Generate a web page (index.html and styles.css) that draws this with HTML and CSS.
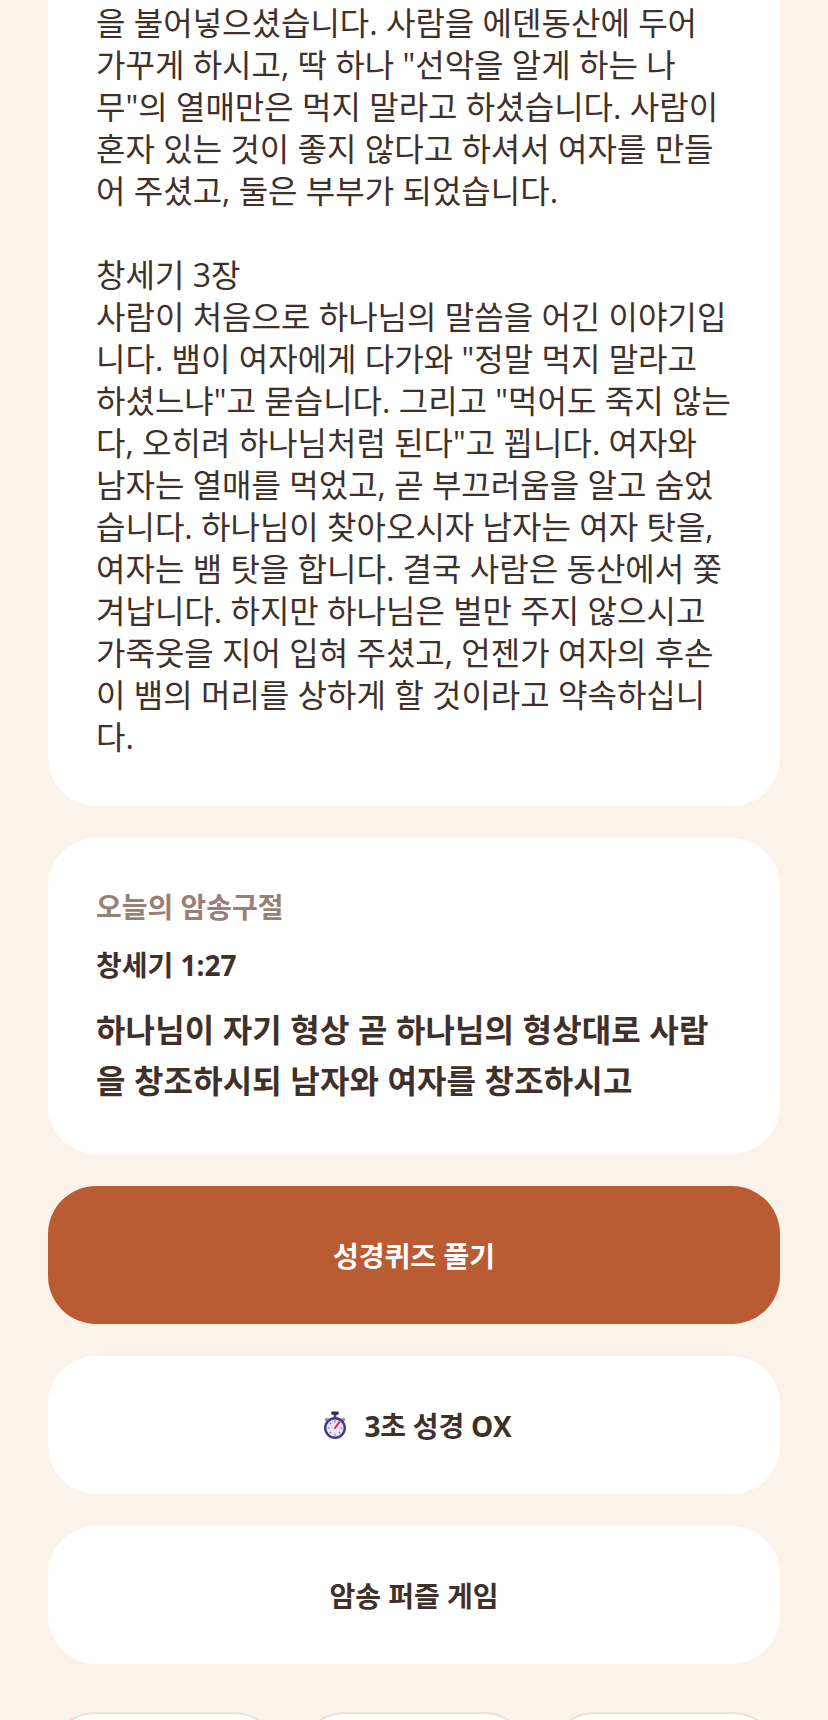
FILE: index.html
```html
<!DOCTYPE html>
<html lang="ko">
<head>
<meta charset="utf-8">
<title>오늘의 성경</title>
<link rel="stylesheet" href="styles.css">
</head>
<body>
<main class="page">
  <section class="card card-story">
    <p class="story">을 불어넣으셨습니다. 사람을 에덴동산에 두어<br>가꾸게 하시고, 딱 하나 "선악을 알게 하는 나<br>무"의 열매만은 먹지 말라고 하셨습니다. 사람이<br>혼자 있는 것이 좋지 않다고 하셔서 여자를 만들<br>어 주셨고, 둘은 부부가 되었습니다.<br><br>창세기 3장<br>사람이 처음으로 하나님의 말씀을 어긴 이야기입<br>니다. 뱀이 여자에게 다가와 "정말 먹지 말라고<br>하셨느냐"고 묻습니다. 그리고 "먹어도 죽지 않는<br>다, 오히려 하나님처럼 된다"고 꾑니다. 여자와<br>남자는 열매를 먹었고, 곧 부끄러움을 알고 숨었<br>습니다. 하나님이 찾아오시자 남자는 여자 탓을,<br>여자는 뱀 탓을 합니다. 결국 사람은 동산에서 쫓<br>겨납니다. 하지만 하나님은 벌만 주지 않으시고<br>가죽옷을 지어 입혀 주셨고, 언젠가 여자의 후손<br>이 뱀의 머리를 상하게 할 것이라고 약속하십니<br>다.</p>
  </section>
  <section class="card card-verse">
    <h2 class="verse-label">오늘의 암송구절</h2>
    <h3 class="verse-ref">창세기 1:27</h3>
    <p class="verse-text">하나님이 자기 형상 곧 하나님의 형상대로 사람<br>을 창조하시되 남자와 여자를 창조하시고</p>
  </section>
  <button class="action action-primary">성경퀴즈 풀기</button>
  <button class="action action-timer"><svg class="timer" viewBox="0 0 34 28" width="34" height="28" aria-hidden="true"><path d="M10.2 6.4l3 1.6-2.6 3.2-2.4-2.6z M27.8 6.4l-3 1.6 2.6 3.2 2.4-2.6z" fill="#9c97a8"/><rect x="17.6" y="2.4" width="2.8" height="4" fill="#4a4378"/><rect x="15.2" y="0.4" width="7.6" height="3.4" rx="1.4" fill="#2e2860"/><circle cx="19" cy="17" r="11" fill="#463a80"/><circle cx="19" cy="17" r="8.6" fill="#e9e4ee"/><path d="M19 9.6v2M19 22.4v2M11.6 17h2M24.4 17h2M13.8 11.8l1.4 1.4M24.2 22.2l-1.4-1.4M13.8 22.2l1.4-1.4" stroke="#7d7694" stroke-width="1.2" fill="none"/><path d="M19 17l4.4-5.8" stroke="#e3245f" stroke-width="2" stroke-linecap="round"/></svg><span class="timer-label">3초 성경 OX</span></button>
  <button class="action">암송 퍼즐 게임</button>
  <nav class="mini-row">
    <a class="mini"></a>
    <a class="mini"></a>
    <a class="mini"></a>
  </nav>
</main>
</body>
</html>
```

FILE: styles.css
```css
* { box-sizing: border-box; }
html, body { margin: 0; padding: 0; }
body {
  height: 1720px;
  overflow: hidden;
  background: #fbf2ea;
  color: #40302a;
  font-family: "Open Sans", "Noto Sans CJK KR", sans-serif;
}
.page {
  display: flex;
  flex-direction: column;
  gap: 32px;
  padding: 0 48px;
  margin-top: -46px;
}
.card {
  background: #fff;
  border-radius: 48px;
  padding: 48px;
}
.story {
  margin: 0;
  font-size: 32px;
  line-height: 42px;
  white-space: nowrap;
}
.verse-label {
  margin: 0;
  font-size: 28px;
  line-height: 42px;
  font-weight: 700;
  color: #998076;
}
.verse-ref {
  margin: 16px 0 0;
  font-size: 28px;
  line-height: 42px;
  font-weight: 700;
}
.verse-text {
  margin: 18px 0 0;
  font-size: 32px;
  line-height: 51.2px;
  font-weight: 700;
  letter-spacing: 0.13px;
  white-space: nowrap;
}
.action {
  display: flex;
  align-items: center;
  justify-content: center;
  height: 138px;
  border: 0;
  border-radius: 48px;
  background: #fff;
  color: #40302a;
  font: 700 28px "Open Sans", "Noto Sans CJK KR", sans-serif;
}
.action-timer { gap: 14px; }
.timer-label { letter-spacing: -0.2px; }
.action-primary { background: #ba5c33; color: #fff; }
.mini-row {
  display: grid;
  grid-template-columns: repeat(3, 1fr);
  gap: 16px;
  margin-top: 16px;
}
.mini {
  height: 120px;
  border: 2px solid #f0e0d6;
  border-radius: 48px;
  background: #fff;
}
```
